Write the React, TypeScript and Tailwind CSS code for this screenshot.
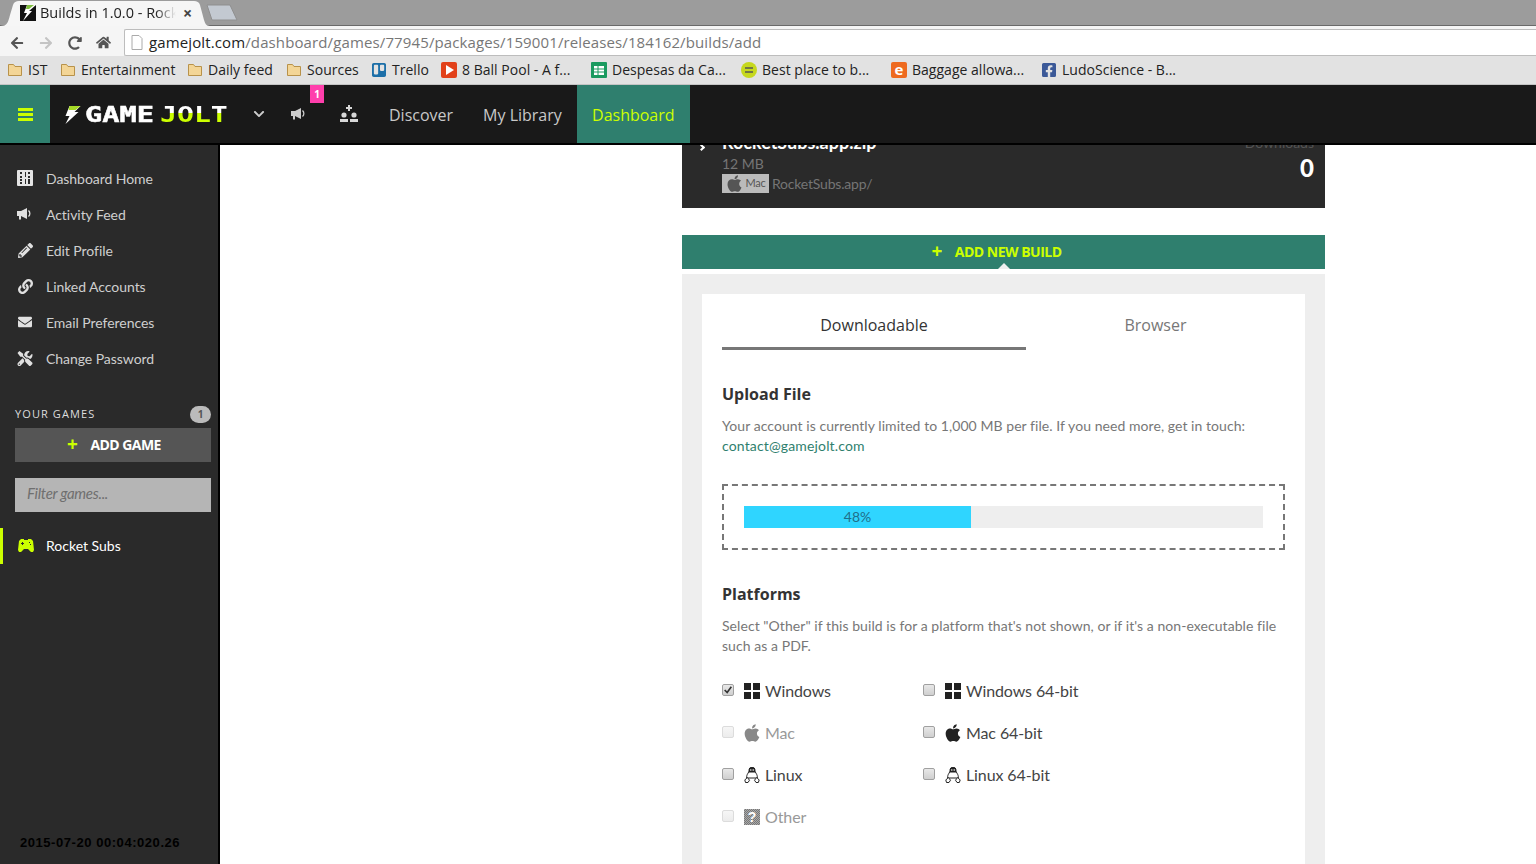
import { FunctionComponent, ReactNode } from 'react';
import {
  FaApple,
  FaArrowLeft,
  FaArrowRight,
  FaChevronDown,
  FaEnvelope,
  FaFacebookSquare,
  FaHome,
  FaLink,
  FaPencilAlt,
  FaRedoAlt,
  FaTools,
  FaTrello,
} from 'react-icons/fa';

function DashIcon() {
  return (
    <svg viewBox="0 0 16 16" className="h-[16px] w-[16px]">
      <rect width="16" height="16" rx="1" fill="#e4e4e4" />
      <path d="M3 2h2v2H3zM3 6h2v2H3zM3 9h2v2H3zM3 12h2v2H3zM8 2h1v5H8zM11 2h2v2h-2zM11 6h2v2h-2zM8 9h1v5H8zM11 9h2v5h-2z" fill="#2a2a2a" />
    </svg>
  );
}

function HornIcon({ className }: { className: string }) {
  return (
    <svg viewBox="0 0 16 12" className={className} fill="currentColor">
      <path d="M0 3h4l6-3v11L4 8v3.500H2V8H0z" />
      <path d="M11.500 2.500a4 4 0 0 1 0 6" fill="none" stroke="currentColor" strokeWidth="1.300" />
    </svg>
  );
}

function GamepadIcon() {
  return (
    <svg viewBox="0 0 16 13" className="h-[13px] w-[16px]">
      <path d="M3 0h3v1h4V0h3l2 2 1 9-1 2h-2l-3-3H6l-3 3H1l-1-2 1-9z" fill="#ccff00" />
      <path d="M3 4h1V3h1v1h1v1H5v1H4V5H3zM11 3h1v1h-1zM12 5h1v1h-1z" fill="#2a2a2a" />
    </svg>
  );
}

function FolderIcon() {
  return (
    <svg viewBox="0 0 16 14" className="h-[14px] w-[16px]">
      <path d="M1.500 1.500h5l1.500 2h6.500v9h-13z" fill="#f3d596" stroke="#b8924a" />
    </svg>
  );
}

function WindowsIcon() {
  return (
    <svg viewBox="0 0 16 16" className="h-[16px] w-[16px]" fill="#222">
      <rect x="0" y="0" width="7" height="7" />
      <rect x="9" y="0" width="7" height="7" />
      <rect x="0" y="9" width="7" height="7" />
      <rect x="9" y="9" width="7" height="7" />
    </svg>
  );
}

function TuxIcon() {
  return (
    <svg viewBox="0 0 16 16" className="h-[16px] w-[16px]">
      <path d="M8 0c2 0 3 1.500 3 3.500 0 1 .3 1.700 1 2.700 1 1.400 1.500 3 1.300 4.800H2.700C2.500 9.200 3 7.600 4 6.200c.7-1 1-1.700 1-2.700C5 1.500 6 0 8 0z" fill="#fff" stroke="#222" />
      <path d="M8 0c2 0 3 1.500 3 3.500l.2 2H4.800l.2-2C5 1.500 6 0 8 0z" fill="#222" />
      <circle cx="6.800" cy="3" r=".8" fill="#fff" />
      <circle cx="9.200" cy="3" r=".8" fill="#fff" />
      <path d="M0.800 13l2.500-2.500 2.200 2.700-1.500 2.300H1.500zM15.200 13l-2.500-2.500-2.200 2.700 1.500 2.300h2.300z" fill="#fff" stroke="#222" />
    </svg>
  );
}

function UsersIcon() {
  return (
    <svg viewBox="0 0 18 18" className="h-[18px] w-[18px]" fill="#d8d8d8">
      <path d="M8 0h2v2h2v2h-2v2H8V4H6V2h2z" />
      <circle cx="4" cy="10" r="2.600" />
      <circle cx="14" cy="10" r="2.600" />
      <path d="M0 14h8v3H0zM10 14h8v3h-8z" />
    </svg>
  );
}

function OtherIcon() {
  return (
    <span className="flex h-[16px] w-[16px] items-center justify-center bg-[repeating-conic-gradient(#777_0_25%,#aaa_0_50%)] bg-[length:2px_2px] font-['Liberation_Sans',sans-serif] text-[14px] font-bold leading-none text-white">
      ?
    </span>
  );
}

const sideLinks = [
  { label: 'Dashboard Home', icon: <DashIcon /> },
  { label: 'Activity Feed', icon: <HornIcon className="h-[12px] w-[16px]" /> },
  { label: 'Edit Profile', icon: <FaPencilAlt className="h-[15px] w-[15px]" /> },
  { label: 'Linked Accounts', icon: <FaLink className="h-[15px] w-[15px]" /> },
  { label: 'Email Preferences', icon: <FaEnvelope className="h-[14px] w-[17px]" /> },
  { label: 'Change Password', icon: <FaTools className="h-[15px] w-[16px]" /> },
];

const Bookmark: FunctionComponent<{ icon: ReactNode; label: string; className: string }> = ({
  icon,
  label,
  className,
}) => (
  <div className={`flex shrink-0 items-center gap-[5px] ${className}`}>
    <span className="flex h-[16px] w-[16px] shrink-0 items-center justify-center">{icon}</span>
    <span className="whitespace-nowrap">{label}</span>
  </div>
);

const Check: FunctionComponent<{ checked?: boolean; disabled?: boolean }> = ({ checked, disabled }) => (
  <span
    className={`-mt-[2px] flex h-[12px] w-[12px] shrink-0 items-center justify-center rounded-[2px] border bg-gradient-to-b ${
      disabled ? 'border-[#dcdcdc] from-[#f6f6f6] to-[#ececec]' : 'border-[#a0a0a0] from-[#e8e8e8] to-[#cfcfcf]'
    }`}
  >
    {checked && (
      <svg viewBox="0 0 12 12" className="h-[10px] w-[10px]">
        <path d="M2 6l3 3 5-7" fill="none" stroke="#333" strokeWidth="2" />
      </svg>
    )}
  </span>
);

const Platform: FunctionComponent<{
  icon: ReactNode;
  label: string;
  checked?: boolean;
  disabled?: boolean;
}> = ({ icon, label, checked, disabled }) => (
  <label className={`flex h-[42px] items-center ${disabled ? 'text-[#999]' : 'text-[#444]'}`}>
    <Check checked={checked} disabled={disabled} />
    <span className={`ml-[10px] flex h-[16px] w-[16px] items-center justify-center ${disabled ? 'text-[#888]' : 'text-[#222]'}`}>
      {icon}
    </span>
    <span className="ml-[5px] text-[16px] tracking-[-0.1px]">{label}</span>
  </label>
);

export default function App() {
  return (
    <div className="relative flex h-[864px] w-[1536px] flex-col overflow-hidden bg-white font-['Lato',sans-serif]">
      {/* tab strip */}
      <div className="relative h-[26px] shrink-0 border-b border-[#6a6a6a] bg-[#9c9c9c]">
        <svg viewBox="0 0 240 26" className="absolute left-0 top-0 h-[26px] w-[240px]">
          <path d="M0 26 C7 26 8 23 10 15 L13 5 C14 2 16 1 19 1 L194 1 C197 1 199 2 200 5 L204 20 C205 23 206 26 210 26Z" fill="#f6f6f6" />
          <path d="M207 5 H230 L237 20 H212Z" fill="#c3c9d1" stroke="#8f8f8f" />
        </svg>
        <div className="relative flex h-full items-center pl-[20px] pt-[1px] font-['Open_Sans',sans-serif] text-[14.5px] text-[#222]">
          <svg viewBox="0 0 16 16" className="h-[16px] w-[16px] shrink-0">
            <rect width="16" height="16" fill="#111" />
            <path d="M16 0 L9 6 H12 L3 16 L7 8 H4 L7 0Z" fill="#fff" />
            <path d="M7 0 H14 L9 4 H6Z" fill="#7fbf3f" />
          </svg>
          <span className="ml-[4px] w-[136px] overflow-hidden whitespace-nowrap [mask-image:linear-gradient(to_right,black_85%,transparent)]">
            Builds in 1.0.0 - Rocket Subs
          </span>
          <span className="ml-[7px] text-[16px] font-bold leading-none text-[#444]">×</span>
        </div>
      </div>

      {/* address bar */}
      <div className="flex h-[30px] shrink-0 items-center bg-[#f5f5f5] pl-[10px] pr-[0px] pt-[3px]">
        <FaArrowLeft className="h-[14px] w-[14px] text-[#555]" />
        <FaArrowRight className="ml-[15px] h-[14px] w-[14px] text-[#c4c4c4]" />
        <FaRedoAlt className="ml-[15px] h-[14px] w-[14px] text-[#555]" />
        <FaHome className="ml-[14px] h-[15px] w-[15px] text-[#555]" />
        <div className="ml-[13px] flex h-[27px] flex-1 items-center rounded-l-[2px] border border-r-0 border-[#bdbdbd] bg-white pl-[6px] font-['Open_Sans',sans-serif] text-[15px] tracking-[0.12px] text-[#777]">
          <svg viewBox="0 0 12 15" className="h-[15px] w-[12px] shrink-0">
            <path d="M1 .5h7l3 3v11H1z" fill="#fff" stroke="#aaa" />
          </svg>
          <span className="ml-[6px] whitespace-nowrap">
            <span className="text-[#222]">gamejolt.com</span>/dashboard/games/77945/packages/159001/releases/184162/builds/add
          </span>
        </div>
      </div>

      {/* bookmarks */}
      <div className="flex h-[29px] shrink-0 items-center border-b border-[#c4c4c4] bg-[#e2e2e2] pb-[1px] pl-[7px] font-['Open_Sans',sans-serif] text-[14px] tracking-[0.02px] text-[#222]">
        <Bookmark icon={<FolderIcon />} label="IST" className="w-[53px]" />
        <Bookmark icon={<FolderIcon />} label="Entertainment" className="w-[127px]" />
        <Bookmark icon={<FolderIcon />} label="Daily feed" className="w-[99px]" />
        <Bookmark icon={<FolderIcon />} label="Sources" className="w-[85px]" />
        <Bookmark icon={<FaTrello className="h-[16px] w-[16px] text-[#1c6fa8]" />} label="Trello" className="w-[70px]" />
        <Bookmark
          icon={
            <svg viewBox="0 0 16 16" className="h-[16px] w-[16px]">
              <rect width="16" height="16" rx="2" fill="#e2411a" />
              <path d="M5 3l8 5-8 5z" fill="#fff" />
            </svg>
          }
          label="8 Ball Pool - A f..."
          className="w-[150px]"
        />
        <Bookmark
          icon={
            <svg viewBox="0 0 16 16" className="h-[16px] w-[16px]">
              <rect width="16" height="16" rx="1" fill="#1a9a5f" />
              <path d="M3 4h10v9H3z" fill="#fff" />
              <path d="M3 7h10M3 10h10M7 4v9" stroke="#1a9a5f" />
            </svg>
          }
          label="Despesas da Ca..."
          className="w-[150px]"
        />
        <Bookmark
          icon={
            <svg viewBox="0 0 16 16" className="h-[16px] w-[16px]">
              <circle cx="8" cy="8" r="8" fill="#c6d81e" />
              <path d="M4 6h8M4 10h8" stroke="#555" strokeWidth="1.500" />
            </svg>
          }
          label="Best place to b..."
          className="w-[150px]"
        />
        <Bookmark
          icon={
            <span className="flex h-[16px] w-[16px] items-center justify-center rounded-[2px] bg-[#ee6a1f] text-[15px] font-bold leading-none text-white">
              e
            </span>
          }
          label="Baggage allowa..."
          className="w-[150px]"
        />
        <Bookmark icon={<FaFacebookSquare className="h-[16px] w-[16px] text-[#3b5998]" />} label="LudoScience - B..." className="w-[150px]" />
      </div>

      {/* site header */}
      <header className="flex h-[60px] shrink-0 border-b-2 border-black bg-[#191919] font-['Open_Sans',sans-serif]">
        <div className="flex w-[50px] items-center justify-center bg-[#2f7f6e]">
          <div className="flex w-[15px] flex-col gap-[2px]">
            <span className="h-[3px] bg-[#ccff00]" />
            <span className="h-[3px] bg-[#ccff00]" />
            <span className="h-[3px] bg-[#ccff00]" />
          </div>
        </div>
        <div className="ml-[14px] flex w-[187px] items-center whitespace-nowrap pt-[1px] font-['DejaVu_Sans_Mono',monospace] text-[22px] font-bold leading-none">
          <svg viewBox="0 0 16 18" className="h-[18px] w-[17px]">
            <path d="M5 0h11L10 6h4L1 18l4-8H1z" fill="#fff" />
            <path d="M5 0h11l-5 4H4z" fill="#a5d926" />
          </svg>
          <span className="ml-[4px] w-[70px] origin-left scale-x-[1.3] text-white [-webkit-text-stroke:0.5px_white]">GAME</span>
          <span className="ml-[5px] w-[68px] origin-left scale-x-[1.28] bg-gradient-to-b from-white from-40% to-[#ccff00] to-40% bg-clip-text text-transparent">JOLT</span>
        </div>
        <div className="flex w-[60px] items-center">
          <FaChevronDown className="ml-[2px] h-[12px] w-[12px] text-[#ccc]" />
          <div className="relative ml-[26px] text-[#ccc]">
            <HornIcon className="h-[12px] w-[16px]" />
            <span className="absolute -top-[23px] left-[19px] flex h-[18px] w-[14px] items-center justify-center bg-[#ff3fac] text-[10px] font-bold text-white">
              1
            </span>
          </div>
        </div>
        <div className="ml-[29px] flex items-center">
          <UsersIcon />
        </div>
        <nav className="ml-[31px] flex text-[16px]">
          <a className="flex items-center pt-[1px] text-[#c8c8c8]">Discover</a>
          <a className="ml-[30px] flex items-center pt-[1px] text-[#c8c8c8]">My Library</a>
          <a className="ml-[15px] flex w-[113px] items-center justify-center bg-[#2f7f6e] pt-[1px] text-[#ccff00]">Dashboard</a>
        </nav>
      </header>

      <div className="flex min-h-0 flex-1">
        {/* sidebar */}
        <aside className="relative flex w-[220px] shrink-0 flex-col border-r-2 border-black bg-[#2a2a2a] pt-[15px]">
          <ul className="text-[14px] tracking-[-0.05px] text-[#cfcfcf]">
            {sideLinks.map((l) => (
              <li key={l.label} className="flex h-[36px] items-center pl-[17px]">
                <span className="flex w-[16px] items-center justify-center text-[#e0e0e0]">{l.icon}</span>
                <span className="ml-[13px]">{l.label}</span>
              </li>
            ))}
          </ul>
          <div className="mt-[30px] flex items-center justify-between pl-[15px] pr-[7px] font-['Open_Sans',sans-serif] text-[11px] uppercase tracking-[1.1px] text-[#ddd]">
            <span>Your Games</span>
            <span className="flex h-[17px] w-[21px] items-center justify-center rounded-full bg-[#bbb] text-[10px] font-bold tracking-normal text-[#555]">1</span>
          </div>
          <div className="mx-[7px] ml-[15px] mt-[5px] flex h-[34px] items-center justify-center bg-[#555] pb-[1px] pl-[2px] font-['Open_Sans',sans-serif] text-[14px] font-bold tracking-[-0.55px] text-white">
            <span className="mr-[13px] text-[19px] font-bold leading-none text-[#ccff00]">+</span>
            ADD GAME
          </div>
          <div className="mx-[7px] ml-[15px] mt-[16px] flex h-[34px] items-center bg-[#b5b5b5] pb-[3px] pl-[12px] text-[15px] italic tracking-[-0.3px] text-[#6f6f6f]">
            Filter games...
          </div>
          <div className="mt-[16px] flex h-[36px] items-center border-l-[3px] border-[#ccff00] pb-[1px] pl-[15px] text-[14px] text-white">
            <GamepadIcon />
            <span className="ml-[12px]">Rocket Subs</span>
          </div>
          <span className="absolute bottom-[12px] left-[20px] font-['Liberation_Sans',sans-serif] text-[13px] font-bold tracking-[0.55px] text-black">
            2015-07-20 00:04:020.26
          </span>
        </aside>

        {/* main */}
        <main className="min-w-0 flex-1 pl-[462px] pr-[211px]">
          <section className="relative h-[63px] overflow-hidden bg-[#2a2a2a] pl-[40px] pr-[11px] text-[#757575]">
            <div className="-mt-[14px] flex justify-between">
              <div>
                <div className="text-[18px] font-bold leading-[22px] text-white">RocketSubs.app.zip</div>
                <div className="mt-[1px] text-[14px] leading-[20px]">12 MB</div>
                <div className="-mt-[1px] flex items-center text-[14px] tracking-[-0.2px]">
                  <span className="flex h-[19px] w-[47px] items-center justify-center bg-[#bbb] text-[11px] text-[#555]">
                    <FaApple className="mr-[1px] h-[19px] w-[19px] shrink-0 text-[#555]" />
                    Mac
                  </span>
                  <span className="ml-[3px]">RocketSubs.app/</span>
                </div>
              </div>
              <div className="text-right">
                <div className="mt-[1px] text-[14px] leading-[22px] text-[#555]">Downloads</div>
                <div className="text-[24px] font-black leading-[28px] text-white">0</div>
              </div>
            </div>
            <span className="absolute left-[17px] top-0 h-[5px] w-[5px] rotate-45 border-r-2 border-t-2 border-white" />
          </section>

          <div className="relative mt-[27px] flex h-[34px] items-center justify-center bg-[#2f7f6e] pb-[1px] pr-[14px] font-['Open_Sans',sans-serif] text-[14px] font-bold tracking-[-0.5px] text-[#ccff00]">
            <span className="mr-[13px] text-[19px] font-bold leading-none">+</span>
            ADD NEW BUILD
            <span className="absolute bottom-0 left-[322px] h-0 w-0 -translate-x-1/2 border-x-[6px] border-b-[6px] border-x-transparent border-b-[#eee]" />
          </div>

          <div className="mt-[5px] bg-[#eee] px-[20px] pt-[20px]">
            <div className="bg-white px-[20px]">
              <div className="flex h-[56px] pt-0 font-['Open_Sans',sans-serif] text-[16px]">
                <div className="flex w-[304px] items-center justify-center border-b-[3px] border-[#777] pt-[8px] text-[#333]">Downloadable</div>
                <div className="flex flex-1 items-center justify-center pb-[3px] pt-[8px] text-[#777]">Browser</div>
              </div>
              <h3 className="mt-[33px] font-['Open_Sans',sans-serif] text-[16px] font-bold leading-[22px] text-[#333]">Upload File</h3>
              <p className="mt-[11px] text-[14px] leading-[20px] tracking-[0.06px] text-[#777]">
                Your account is currently limited to 1,000 MB per file. If you need more, get in touch:
                <br />
                <a className="tracking-[0.15px] text-[#2f7f6e]">contact@gamejolt.com</a>
              </p>
              <div className="mt-[28px] border-2 border-dashed border-[#777] px-[20px] py-[20px]">
                <div className="h-[22px] bg-[#eee]">
                  <div className="flex h-full w-[227px] items-center justify-center bg-[#2fd5ff] pb-[1px] text-[14px] text-[#1f6f8a]">48%</div>
                </div>
              </div>
              <h3 className="mt-[33px] font-['Open_Sans',sans-serif] text-[16px] font-bold leading-[22px] text-[#333]">Platforms</h3>
              <p className="mt-[11px] text-[14px] leading-[20px] tracking-[0.06px] text-[#777]">
                Select "Other" if this build is for a platform that's not shown, or if it's a non-executable file
                <br />
                such as a PDF.
              </p>
              <div className="mt-[14px] flex">
                <div className="w-[201px]">
                  <Platform icon={<WindowsIcon />} label="Windows" checked />
                  <Platform icon={<FaApple className="h-[20px] w-[20px] shrink-0" />} label="Mac" disabled />
                  <Platform icon={<TuxIcon />} label="Linux" />
                  <Platform icon={<OtherIcon />} label="Other" disabled />
                </div>
                <div>
                  <Platform icon={<WindowsIcon />} label="Windows 64-bit" />
                  <Platform icon={<FaApple className="h-[20px] w-[20px] shrink-0" />} label="Mac 64-bit" />
                  <Platform icon={<TuxIcon />} label="Linux 64-bit" />
                </div>
              </div>
              <div className="h-[40px]" />
            </div>
          </div>
        </main>
      </div>
    </div>
  );
}
